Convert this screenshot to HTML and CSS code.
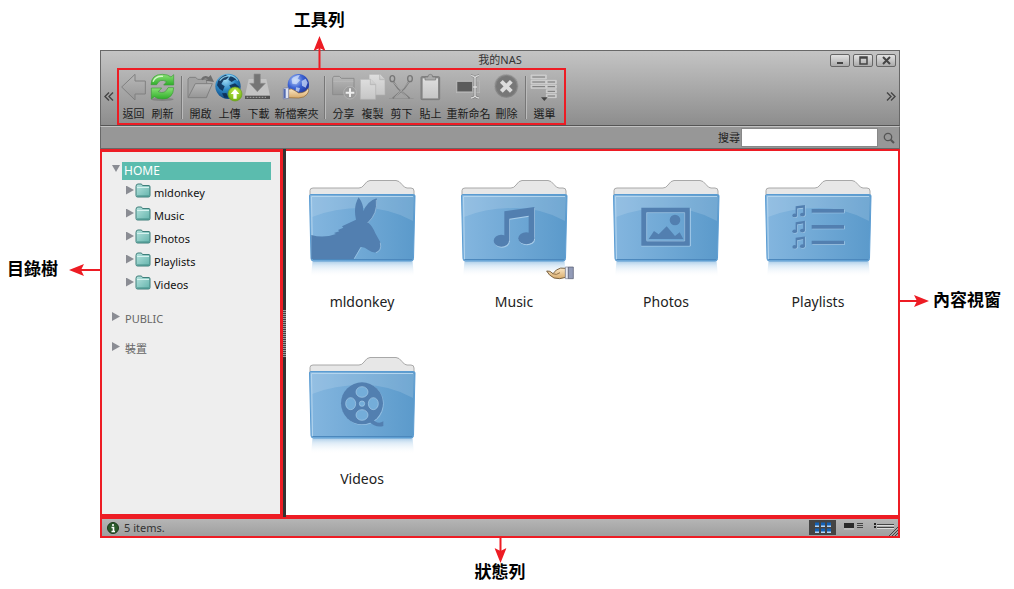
FILE: index.html
```html
<!DOCTYPE html>
<html lang="zh-Hant">
<head>
<meta charset="utf-8">
<meta name="viewport" content="width=device-width, initial-scale=1">
<title>我的NAS</title>
<link rel="stylesheet" href="styles.css">
</head>
<body>
<svg class="defs" aria-hidden="true">
  <defs>
    <linearGradient id="blue" x1="0" y1="0" x2="1" y2="0"><stop offset="0" stop-color="#84b6df"/><stop offset="1" stop-color="#5b9acb"/></linearGradient>
    <linearGradient id="fade" x1="0" y1="0" x2="0" y2="1"><stop offset="0" stop-color="#8dbbe0" stop-opacity=".75"/><stop offset=".3" stop-color="#a9cdea" stop-opacity=".4"/><stop offset="1" stop-color="#fff" stop-opacity="0"/></linearGradient>
    <linearGradient id="teal" x1="0" y1="0" x2="1" y2="1"><stop offset="0" stop-color="#b8e4df"/><stop offset="1" stop-color="#62b3ab"/></linearGradient>
    <linearGradient id="grey" x1="0" y1="0" x2="0" y2="1"><stop offset="0" stop-color="#b8b8b8"/><stop offset="1" stop-color="#969696"/></linearGradient>
    <linearGradient id="paper" x1="0" y1="0" x2="0" y2="1"><stop offset="0" stop-color="#dedede"/><stop offset="1" stop-color="#c6c6c6"/></linearGradient>
    <linearGradient id="green" x1="0" y1="0" x2="0" y2="1"><stop offset="0" stop-color="#8be276"/><stop offset="1" stop-color="#2fae2a"/></linearGradient>
    <radialGradient id="globe" cx=".4" cy=".25" r=".8"><stop offset="0" stop-color="#9fdcf8"/><stop offset=".5" stop-color="#2a86c4"/><stop offset="1" stop-color="#0c3f78"/></radialGradient>
    <radialGradient id="globe2" cx=".35" cy=".3" r=".8"><stop offset="0" stop-color="#b7cdf8"/><stop offset=".45" stop-color="#3c63d4"/><stop offset="1" stop-color="#152a92"/></radialGradient>
    <radialGradient id="lime" cx=".5" cy=".3" r=".7"><stop offset="0" stop-color="#c2ea4a"/><stop offset="1" stop-color="#6fb012"/></radialGradient>
    <linearGradient id="skin" x1="0" y1="0" x2="0" y2="1"><stop offset="0" stop-color="#fbe7c4"/><stop offset="1" stop-color="#d8ab6c"/></linearGradient>
    <g id="folder">
      <path d="M2 18V11.500Q2 9 5 9H51Q54 9 56 6Q59 1.500 62 1.500H88Q91 1.500 94 5.500Q96.500 9 99 9H103Q106 9 106 12V18Z" fill="#e7e7e7" stroke="#a8a8a8"/>
      <path d="M4.500 82H104.500L106 98H3Z" fill="url(#fade)"/>
      <path d="M1.500 17Q1.500 15.500 3 15.500H105.500Q107 15.500 107 17L105.500 79.500Q105.500 82 103 82H5.500Q3 82 3 79.500Z" fill="url(#blue)" stroke="#5b9cd2"/>
      <path d="M3 17H106L105 42Q82 29 55 29Q26 29 4 38Z" fill="#fff" opacity=".14"/>
      <path d="M4.500 80L3.500 17.500H105" fill="none" stroke="#b4d5ee" stroke-width="1"/>
      <path d="M4.500 80.500H104" fill="none" stroke="#4c88bd"/>
    </g>
    <symbol id="mini" viewBox="0 0 16 15">
      <path d="M1 3.500Q1 1 3 1H6Q7 1 7.500 2.500H14Q15 2.500 15 4V12.500Q15 14 13.500 14H2.500Q1 14 1 12.500Z" fill="url(#teal)" stroke="#3f7f7b"/>
      <path d="M2 4.500H14" stroke="#d5f1ee"/><path d="M2 13H14" stroke="#468f89"/>
    </symbol>
    <g id="note"><ellipse cx="634" cy="227" rx="23" ry="18"/><ellipse cx="709" cy="220" rx="24" ry="18"/><path d="M643 139L733 126V220H716V152L658 161V227H643Z"/></g>
  </defs>
</svg>

<main class="window">
  <header class="chrome">
    <div class="titlebar">
      <h1 class="title">我的NAS</h1>
      <div class="winbuttons">
        <button class="winbtn" aria-label="最小化"><svg viewBox="0 0 18 11"><path d="M6 8h6" stroke="#444" stroke-width="2"/></svg></button>
        <button class="winbtn" aria-label="最大化"><svg viewBox="0 0 18 11"><path d="M6 2h7v7h-7zM6 3h7" fill="none" stroke="#444" stroke-width="1.500"/></svg></button>
        <button class="winbtn" aria-label="關閉"><svg viewBox="0 0 18 11"><path d="M6 2l7 7M13 2l-7 7" stroke="#444" stroke-width="2"/></svg></button>
      </div>
    </div>
    <div class="toolrow">
      <button class="scroller" aria-label="向左捲動"><svg viewBox="0 0 10 9"><path d="M5 .500L1 4.500L5 8.500M9 .500L5 4.500L9 8.500" fill="none" stroke="#444" stroke-width="1.400"/></svg></button>
      <div class="tools">
        <button class="tool"><svg viewBox="72 81 87 90"><path d="M80 126L120 88V108H151V147H120V165Z" fill="url(#grey)" stroke="#808080" stroke-width="3"/></svg>返回</button>
        <button class="tool"><svg viewBox="159 81 87 90"><ellipse cx="202" cy="163" rx="34" ry="5" fill="#666" opacity=".5"/><path d="M168 119Q169 88 202 88Q219 88 228 96L236 89V120H206L215 110Q194 99 185 119Z" fill="url(#green)" stroke="#3c9a38" stroke-width="2"/><path d="M236 128Q235 162 202 162Q187 162 178 155L169 162V129H200L190 140Q210 149 219 128Z" fill="url(#green)" stroke="#3c9a38" stroke-width="2"/><path d="M174 110Q182 92 204 94" fill="none" stroke="#d4f7ca" stroke-width="4"/></svg>刷新</button>
        <span class="sep"></span>
        <button class="tool"><svg viewBox="273 81 87 90"><path d="M279 157V102L284 97H302L308 103H335V157Z" fill="#a2a2a2" stroke="#808080" stroke-width="3"/><path d="M279 158L301 116H352L334 158Z" fill="url(#grey)" stroke="#808080" stroke-width="3"/><path d="M318 102Q326 88 341 96L347 90L357 111L332 107L338 103Q329 97 323 106Z" fill="#6e6e6e"/></svg>開啟</button>
        <button class="tool"><svg viewBox="360 81 87 90"><circle cx="399" cy="124" r="38" fill="url(#globe)"/><path d="M369 108Q377 94 392 89L402 95L393 104L386 105L379 117L389 124L383 138L374 132L366 121ZM406 92Q421 94 430 107L420 104L410 111L400 104ZM403 121L420 115L432 125L425 140L411 136ZM381 145L394 144L400 158L388 158Z" fill="#0a2a52" opacity=".85"/><path d="M374 107Q385 93 405 92Q420 94 428 107" fill="none" stroke="#9ee0fa" stroke-width="4" opacity=".8"/><circle cx="420" cy="147" r="21" fill="url(#lime)" stroke="#6b9f1d" stroke-width="2"/><path d="M420 132L433 147H425V161H415V147H407Z" fill="#fff"/></svg>上傳</button>
        <button class="tool"><svg viewBox="447 81 87 90"><path d="M461 102H514L525 153H450Z" fill="#c4c4c4"/><path d="M450 152H525V162H450Z" fill="#505050"/><path d="M455 157H513" stroke="#aaa" stroke-width="3" stroke-dasharray="5 4"/><path d="M477 87H496V115H511L487 140L464 115H477Z" fill="#757575" stroke="#909090" stroke-width="2"/></svg>下載</button>
        <button class="tool wide"><svg viewBox="534 81 141 90"><circle cx="610" cy="119" r="32" fill="url(#globe2)"/><path d="M590 102Q600 91 615 90L608 101L616 105L604 118L592 116ZM620 108L632 101L638 113L632 128L621 122ZM603 127L615 129L612 140L602 138Z" fill="#d9e5fb" opacity=".7"/><path d="M579 134Q588 128 600 137L611 144Q632 143 638 131Q645 134 636 148Q629 158 611 159L579 158Z" fill="url(#skin)" stroke="#8f6634" stroke-width="2"/><path d="M565 130L581 128V160L565 162Z" fill="#dfe5f3" stroke="#6974a0" stroke-width="2"/><path d="M566 132H572V160H566Z" fill="#5269ae"/></svg>新檔案夾</button>
        <span class="sep"></span>
        <button class="tool"><svg viewBox="27 81 87 90"><path d="M38 149V98L42 94H58L64 100H102V149Z" fill="url(#grey)" stroke="#8c8c8c" stroke-width="3"/><path d="M40 109H100" stroke="#b8b8b8" stroke-width="3"/><circle cx="90" cy="143" r="19" fill="#9b9b9b" stroke="#bbb" stroke-width="2"/><path d="M90 130V156M77 143H103" stroke="#eee" stroke-width="6"/></svg>分享</button>
        <button class="tool"><svg viewBox="114 81 87 90"><g fill="url(#paper)" stroke="#b0b0b0" stroke-width="2"><path d="M147 88H180L195 103V150H147Z"/><path d="M179 88V104H195"/><path d="M121 103H152L167 118V163H121Z"/><path d="M151 103V119H167"/></g></svg>複製</button>
        <button class="tool"><svg viewBox="201 81 87 90"><path d="M220 110L234 130L269 160M267 110L253 130L218 160" fill="none" stroke="#7c7c7c" stroke-width="5"/><path d="M217 108L263 158M270 108L224 158" stroke="#b8b8b8" stroke-width="2"/><ellipse cx="217" cy="101" rx="7" ry="9" fill="none" stroke="#767676" stroke-width="4"/><ellipse cx="270" cy="101" rx="7" ry="9" fill="none" stroke="#767676" stroke-width="4"/><path d="M207 160H281" stroke="#777" stroke-width="2" opacity=".5"/></svg>剪下</button>
        <button class="tool"><svg viewBox="288 81 87 90"><rect x="303" y="95" width="56" height="69" rx="3" fill="#888" stroke="#7c7c7c" stroke-width="3"/><path d="M308 100H354V160H308Z" fill="url(#paper)"/><path d="M315 105V96H324Q323 88 331 88Q339 88 338 96H347V105Z" fill="#aaa" stroke="#777" stroke-width="2"/></svg>貼上</button>
        <button class="tool wide"><svg viewBox="375 81 141 90"><rect x="409" y="108" width="70" height="35" fill="#aaa" stroke="#bbb" stroke-width="2"/><rect x="412" y="111" width="44" height="28" fill="#5c5c5c"/><path d="M453 92Q461 92 465 98Q469 92 477 92M465 98V153M453 159Q461 159 465 153Q469 159 477 159M459 126H471" fill="none" stroke="#808080" stroke-width="8"/><path d="M453 92Q461 92 465 98Q469 92 477 92M465 98V153M453 159Q461 159 465 153Q469 159 477 159M459 126H471" fill="none" stroke="#ddd" stroke-width="4"/></svg>重新命名</button>
        <button class="tool"><svg viewBox="516 81 87 90"><circle cx="559" cy="124" r="36" fill="#858585" stroke="#aaa" stroke-width="2"/><circle cx="559" cy="124" r="31" fill="#777"/><path d="M544 109L574 139M574 109L544 139" stroke="#ddd" stroke-width="12"/></svg>刪除</button>
        <span class="sep"></span>
        <button class="tool"><svg viewBox="630 81 87 90"><g fill="#c7c7c7" stroke="#d6d6d6" stroke-width="2"><path d="M633 90H679V102H633ZM633 106H679V116H633ZM633 120H679V130H633Z"/><path d="M679 106H709V116H679ZM679 120H709V130H679ZM679 134H709V144H679ZM679 148H709V158H679Z"/></g><path d="M637 96H675M637 111H675M637 125H675M683 111H705M683 125H705M683 139H705M683 153H705" stroke="#777" stroke-width="3"/><path d="M663 157H683L673 168Z" fill="#444"/></svg>選單</button>
        <div class="callout callout-top"><span>工具列</span><svg class="arrow-v" viewBox="0 0 12 32"><path d="M6 8V32" stroke="#ed1c24" stroke-width="2"/><path d="M6 0L12 15L6 12L0 15Z" fill="#ed1c24"/></svg></div>
      </div>
      <button class="scroller scroller-end" aria-label="向右捲動"><svg viewBox="0 0 10 9"><path d="M1 .500L5 4.500L1 8.500M5 .500L9 4.500L5 8.500" fill="none" stroke="#444" stroke-width="1.400"/></svg></button>
    </div>
  </header>

  <form class="search">
    <label for="q">搜尋</label>
    <input id="q" type="text">
    <button class="searchbtn" type="button" aria-label="搜尋"><svg viewBox="0 0 12 12"><circle cx="5" cy="5" r="3.700" fill="none" stroke="#555" stroke-width="1.300"/><path d="M7.700 7.700L11 11" stroke="#555" stroke-width="2"/></svg></button>
  </form>

  <div class="panes">
    <nav class="sidebar">
      <ul class="tree">
        <li>
          <div class="root open"><button class="twist down" aria-label="收合"></button><a class="selected" href="#">HOME</a></div>
          <ul class="children">
            <li><button class="twist" aria-label="展開"></button><svg><use href="#mini"/></svg><a href="#">mldonkey</a></li>
            <li><button class="twist" aria-label="展開"></button><svg><use href="#mini"/></svg><a href="#">Music</a></li>
            <li><button class="twist" aria-label="展開"></button><svg><use href="#mini"/></svg><a href="#">Photos</a></li>
            <li><button class="twist" aria-label="展開"></button><svg><use href="#mini"/></svg><a href="#">Playlists</a></li>
            <li><button class="twist" aria-label="展開"></button><svg><use href="#mini"/></svg><a href="#">Videos</a></li>
          </ul>
        </li>
        <li class="root"><button class="twist" aria-label="展開"></button><a href="#">PUBLIC</a></li>
        <li class="root"><button class="twist" aria-label="展開"></button><a href="#">裝置</a></li>
      </ul>
      <div class="callout callout-left"><span>目錄樹</span><svg class="arrow-h" viewBox="0 0 31 12"><path d="M8 6H31" stroke="#ed1c24" stroke-width="2"/><path d="M0 6L15 0L12 6L15 12Z" fill="#ed1c24"/></svg></div>
    </nav>
    <div class="splitter"><span class="grip"></span></div>
    <section class="content">
      <ul class="files">
        <li class="file"><a href="#"><svg class="big" viewBox="0 0 108 98"><use href="#folder"/><g transform="scale(.333333) translate(-54 -42)" fill="#527fb0"><path d="M64 210Q100 221 138 207L132 204L148 199L144 195L160 188L156 184L198 164Q189 125 206 97Q221 118 220 139Q233 108 260 100Q266 143 235 173Q249 185 256 205L271 232Q276 256 258 262Q246 264 235 255Q221 244 212 246Q206 257 191 282H64Z"/><path d="M259 105Q264 145 233 174M213 247L193 281M271 233Q276 257 258 263" fill="none" stroke="#a8cce9" stroke-width="2"/></g></svg><span>mldonkey</span></a></li>
        <li class="file"><a href="#"><svg class="big" viewBox="0 0 108 98"><use href="#folder"/><g transform="scale(.333333) translate(-510 -42)"><use href="#note" x="2" y="3" fill="#a8cce9"/><use href="#note" fill="#527fb0"/></g></svg><svg class="badge" viewBox="772 303 84 42"><path d="M774 318Q784 316 793 326L803 315Q815 306 831 310V337Q813 344 796 339Q780 331 774 318Z" fill="url(#skin)" stroke="#7b6444" stroke-width="3"/><path d="M791 326Q804 332 814 323" fill="none" stroke="#94744b" stroke-width="3"/><path d="M830 306H839V341H830Z" fill="#e8ebf5" stroke="#777c91" stroke-width="2"/><path d="M839 306H854V341H839Z" fill="#929bb7" stroke="#50566b" stroke-width="2"/></svg><span>Music</span></a></li>
        <li class="file"><a href="#"><svg class="big" viewBox="0 0 108 98"><use href="#folder"/><g transform="scale(.333333) translate(-66 -42)"><path d="M154 243H301V130" fill="none" stroke="#a8cce9" stroke-width="3"/><path d="M154 128H299V242H154ZM170 143V227H283V143Z" fill="#527fb0" fill-rule="evenodd"/><path d="M170 227V143H284V228H170" fill="none" stroke="#a8cce9" stroke-width="2"/><circle cx="255" cy="165" r="16" fill="#527fb0"/><path d="M176 222L192 198L206 208L230 184L255 213L269 202L280 222Z" fill="#527fb0"/></g></svg><span>Photos</span></a></li>
        <li class="file"><a href="#"><svg class="big" viewBox="0 0 108 98"><use href="#folder"/><g transform="scale(.333333) translate(-522 -42)"><g fill="#a8cce9"><path d="M667 134H764V145H667ZM667 182H764V193H667ZM667 229H764V240H667Z"/></g><g fill="#527fb0"><path d="M665 132H762V143H665ZM665 180H762V191H665ZM665 227H762V238H665Z"/><g transform="translate(607 120) scale(.31) translate(-611 -126)"><use href="#note" x="5" y="5" fill="#a8cce9"/><use href="#note"/><use href="#note" x="5" y="158" fill="#a8cce9"/><use href="#note" y="153"/><use href="#note" x="5" y="310" fill="#a8cce9"/><use href="#note" y="305"/></g></g></g></svg><span>Playlists</span></a></li>
        <li class="file"><a href="#"><svg class="big" viewBox="0 0 108 98"><use href="#folder"/><g transform="scale(.333333) translate(-54 -33)"><circle cx="218" cy="177" r="63" fill="#a8cce9" opacity=".7"/><path d="M244 218Q262 241 280 229V243Q258 250 236 229Z" fill="#527fb0"/><circle cx="216" cy="175" r="63" fill="#527fb0"/><g fill="#74add9" stroke="#a8cce9" stroke-width="2"><ellipse cx="216" cy="141" rx="18" ry="16"/><ellipse cx="216" cy="210" rx="18" ry="16"/><ellipse cx="182" cy="176" rx="15" ry="18"/><ellipse cx="250" cy="176" rx="15" ry="18"/><circle cx="216" cy="176" r="8"/></g></g></svg><span>Videos</span></a></li>
      </ul>
      <div class="callout callout-right"><svg class="arrow-h" viewBox="0 0 31 12"><path d="M0 6H23" stroke="#ed1c24" stroke-width="2"/><path d="M31 6L16 0L19 6L16 12Z" fill="#ed1c24"/></svg><span>內容視窗</span></div>
    </section>
  </div>

  <footer class="status">
    <svg class="info" viewBox="0 0 12 12"><circle cx="6" cy="6" r="5.500" fill="#2b5a2b" stroke="#1c3a1c"/><path d="M6 2V4M4.500 5.500H6.500V9.500M4.500 9.500H8" fill="none" stroke="#fff" stroke-width="1.600"/></svg>
    <span class="count">5 items.</span>
    <div class="views">
      <button class="view active" aria-label="圖示檢視"><svg viewBox="0 0 27 15"><path d="M6 6H10M12 6H16M18 6H22M6 12H10M12 12H16M18 12H22" stroke="#b7d6f4" stroke-width="2"/><path d="M6 4H10M12 4H16M18 4H22M6 10H10M12 10H16M18 10H22" stroke="#1261b5" stroke-width="3"/></svg></button>
      <button class="view" aria-label="清單檢視"><svg viewBox="0 0 27 15"><path d="M4 3H14V8H4Z" fill="#2a2a2a"/><path d="M17 3.500H23M17 5.500H23M17 7.500H23" stroke="#444"/><path d="M4 9H14" stroke="#ccc"/></svg></button>
      <button class="view" aria-label="詳細檢視"><svg viewBox="0 0 27 15"><path d="M3 3H5V5H3ZM3 6H5V8H3Z" fill="#222"/><path d="M6 4.500H23M6 7.500H23" stroke="#444"/><path d="M6 5.500H23M6 8.500H23" stroke="#ddd"/></svg></button>
    </div>
    <svg class="resize" viewBox="0 0 9 9"><path d="M0 9L9 0M3 9L9 3M6 9L9 6" stroke="#444"/></svg>
    <div class="callout callout-bottom"><svg class="arrow-v" viewBox="0 0 12 27"><path d="M6 0V18" stroke="#ed1c24" stroke-width="2"/><path d="M6 27L12 12L6 15L0 12Z" fill="#ed1c24"/></svg><span>狀態列</span></div>
  </footer>
</main>
</body>
</html>
```

FILE: styles.css
```css
* { box-sizing: border-box; }
body {
  margin: 0;
  min-height: 100vh;
  padding: 50px 114px 51px 100px;
  display: flex;
  background: #fff;
  color: #222;
  font: 12px/16px "Noto Sans", "Noto Sans CJK TC", sans-serif;
}
button { border: 0; padding: 0; margin: 0; background: none; font: inherit; color: inherit; }
a { color: inherit; text-decoration: none; }
ul { list-style: none; margin: 0; padding: 0; }
svg { display: block; flex: none; }
.defs { position: absolute; width: 0; height: 0; }

.window { flex: 1; display: flex; flex-direction: column; min-width: 0; }
.chrome {
  border: 1px solid #686868;
  border-bottom-color: #555;
  background: linear-gradient(#c4c4c4, #8d8d8d);
}
.titlebar { display: grid; grid-template-columns: 1fr auto 1fr; height: 17px; }
.title { grid-column: 2; margin: 0; font-size: 11px; font-weight: 400; line-height: 17px; color: #333; }
.winbuttons { display: flex; justify-content: flex-end; gap: 3px; padding: 3px 3px 0 0; }
.winbtn {
  width: 20px;
  height: 13px;
  border: 1px solid #666;
  border-radius: 2px;
  background: linear-gradient(#e2e2e2, #aaa);
}
.winbtn svg { width: 18px; height: 11px; }
.toolrow { display: flex; align-items: center; height: 57px; }
.scroller { width: 16px; padding-left: 3px; }
.scroller-end { margin-left: auto; }
.scroller svg { width: 10px; height: 9px; }
.tools {
  position: relative;
  display: flex;
  height: 57px;
  padding: 2px 5px 0 0;
  border: 2px solid #ed1c24;
}
.tool {
  display: flex;
  flex-direction: column;
  align-items: center;
  gap: 4px;
  width: 29px;
  font-size: 11px;
  line-height: 16px;
  white-space: nowrap;
  color: #1c1c1c;
}
.tool svg { width: 29px; height: 30px; }
.wide { width: 47px; }
.wide svg { width: 47px; }
.sep { width: 9px; padding: 4px 4px; }
.sep::before { content: ""; display: block; width: 2px; height: 43px; background: linear-gradient(90deg, #777 50%, #bbb 50%); }

.search {
  display: flex;
  align-items: center;
  justify-content: flex-end;
  height: 23px;
  border: 1px solid #686868;
  border-top-color: #c2c2c2;
  background: #979797;
  font-size: 11px;
}
.search input { width: 137px; height: 19px; margin-left: 1px; border: 1px solid #888; background: #fff; font: inherit; }
.searchbtn { width: 21px; padding-left: 5px; }
.searchbtn svg { width: 12px; height: 12px; }

.panes { flex: 1; display: flex; }
.sidebar {
  position: relative;
  width: 183px;
  padding: 10px 9px 0 10px;
  border: 3px solid #ed1c24;
  border-left-width: 2px;
  background: #eee;
}
.twist { width: 8px; height: 9px; flex: none; background: #8a8c93; clip-path: polygon(0 0, 100% 50%, 0 100%); }
.twist.down { clip-path: polygon(0 0, 100% 0, 50% 100%); height: 7px; }
.root { display: flex; align-items: center; gap: 3px; height: 30px; color: #666; }
.root .twist { margin-bottom: 5px; }
.root.open { height: 18px; gap: 2px; }
.root a { flex: 1; padding-left: 2px; font-size: 11px; line-height: 18px; }
.root .selected { background: #5bbcae; color: #fff; font-size: 12px; }
.children { padding: 1px 0 8px 14px; }
.children li { display: flex; align-items: center; height: 23px; color: #111; font-size: 11px; }
.children a { padding-top: 1px; }
.children svg { width: 16px; height: 15px; margin: 0 3px 4px 1px; }
.children .twist { margin-bottom: 5px; }
.splitter { display: flex; align-items: center; width: 3px; background: #333; }
.grip { width: 3px; height: 47px; background: repeating-linear-gradient(#999 0 1px, #444 1px 2px); }
.content {
  position: relative;
  flex: 1;
  min-width: 0;
  border: 2px solid #ed1c24;
  border-left: 0;
  background: #fff;
}
.files { display: flex; flex-wrap: wrap; }
.file { width: 152px; height: 177px; padding: 28px 22px 0; }
.file a { position: relative; display: flex; flex-direction: column; align-items: center; gap: 15px; font-size: 14px; line-height: 20px; }
.big { width: 108px; height: 98px; }
.badge { position: absolute; left: 86px; top: 87px; width: 28px; height: 14px; }

.status {
  position: relative;
  display: flex;
  align-items: center;
  height: 21px;
  padding-left: 5px;
  border: 2px solid #ed1c24;
  background: linear-gradient(#b5b5b5, #9f9f9f);
  color: #333;
  font-size: 11px;
}
.info { width: 12px; height: 12px; margin-right: 5px; }
.views { display: flex; gap: 4px; margin-left: auto; }
.view { width: 27px; height: 15px; }
.view svg { width: 27px; height: 15px; }
.active { background: #444; }
.resize { position: absolute; right: 0; bottom: 0; width: 9px; height: 9px; }

.callout {
  position: absolute;
  display: flex;
  align-items: center;
  color: #000;
  font: bold 17px/20px "Liberation Serif", "Noto Sans CJK TC", serif;
  white-space: nowrap;
}
.callout-top { flex-direction: column; gap: 5px; left: 45%; bottom: 100%; padding-bottom: 2px; transform: translateX(-50%); }
.callout-left { gap: 11px; right: 100%; top: 108px; padding-right: 2px; }
.callout-right { gap: 4px; left: 100%; top: 140px; }
.callout-bottom { flex-direction: column; top: 100%; left: 50%; transform: translateX(-50%); }
.arrow-v { width: 12px; height: 32px; }
.callout-bottom .arrow-v { height: 27px; }
.arrow-h { width: 31px; height: 12px; }
```
